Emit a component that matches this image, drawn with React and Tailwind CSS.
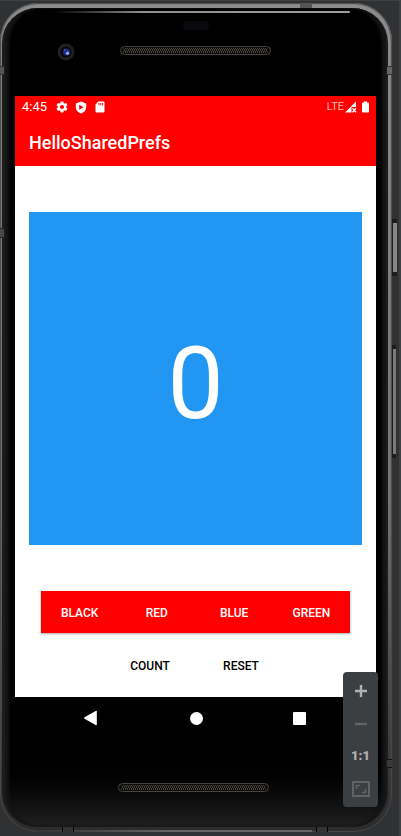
import React, { useState } from "react";

const COLORS = { BLACK: "#000000", RED: "#ff0000", BLUE: "#2196f3", GREEN: "#4caf50" };

function Speaker() {
  return (
    <svg className="h-[9px] w-[151px]" viewBox="0 0 151 9" aria-hidden="true">
      <defs>
        <pattern id="mesh" width="4" height="4" patternUnits="userSpaceOnUse">
          <path d="M0 0l2 2-2 2M2 0l2 2-2 2" stroke="#4c4840" strokeWidth="0.9" fill="none" />
        </pattern>
      </defs>
      <rect x="0.5" y="0.5" width="150" height="8" rx="4" fill="#0d0c0a" stroke="#444341" />
      <rect x="3" y="2" width="145" height="5" rx="2" fill="url(#mesh)" />
    </svg>
  );
}

function Camera() {
  return (
    <svg className="h-[18px] w-[18px]" viewBox="0 0 18 18" aria-hidden="true">
      <circle cx="9" cy="9" r="8.5" fill="#211f22" />
      <circle cx="9" cy="9" r="5.5" fill="#07080f" />
      <circle cx="9.5" cy="9" r="3.6" fill="#1b2c70" />
      <circle cx="10.5" cy="10.2" r="1.8" fill="#7f9cf5" />
      <circle cx="7.6" cy="7" r="1" fill="#4158b8" />
    </svg>
  );
}

function StatusBar() {
  return (
    <div className="flex h-[22px] items-center pr-[7px] pl-[7px] text-white">
      <span className="text-[13px] leading-4">4:45</span>
      <svg className="ml-2 h-[14px] w-[14px]" viewBox="0 0 24 24" fill="currentColor" aria-hidden="true">
        <path d="M19.14 12.94c.04-.3.06-.61.06-.94 0-.32-.02-.64-.07-.94l2.03-1.58a.49.49 0 0 0 .12-.61l-1.92-3.32a.488.488 0 0 0-.59-.22l-2.39.96c-.5-.38-1.03-.7-1.62-.94l-.36-2.54a.484.484 0 0 0-.48-.41h-3.84c-.24 0-.43.17-.47.41l-.36 2.54c-.59.24-1.13.57-1.62.94l-2.39-.96c-.22-.08-.47 0-.59.22L2.74 8.87c-.12.21-.08.47.12.61l2.03 1.58c-.05.3-.09.63-.09.94s.02.64.07.94l-2.03 1.58a.49.49 0 0 0-.12.61l1.92 3.32c.12.22.37.29.59.22l2.39-.96c.5.38 1.03.7 1.62.94l.36 2.54c.05.24.24.41.48.41h3.84c.24 0 .44-.17.47-.41l.36-2.54c.59-.24 1.13-.56 1.62-.94l2.39.96c.22.08.47 0 .59-.22l1.92-3.32c.12-.22.07-.47-.12-.61l-2.01-1.58zM12 15.6A3.6 3.6 0 1 1 12 8.400a3.600 3.600 0 0 1 0 7.200z" />
      </svg>
      <svg className="ml-[6px] h-[13px] w-[12px]" viewBox="0 0 12 13" fill="currentColor" aria-hidden="true">
        <path fillRule="evenodd" d="M6 .5l5.200 2v3.700c0 3-2.200 5.400-5.200 6.300C3 11.600.8 9.200.8 6.200V2.500zM4.200 3.700v5.100l4.300-2.550z" />
      </svg>
      <svg className="ml-[8px] h-[12px] w-[10px]" viewBox="0 0 10 12" fill="currentColor" aria-hidden="true">
        <path fillRule="evenodd" d="M3.300.5H8.500a1 1 0 0 1 1 1v9a1 1 0 0 1-1 1h-7a1 1 0 0 1-1-1V3.500zM3.500 2v2.200h1V2zM5.300 2v2.200h1V2zM7.100 2v2.200h1V2z" />
      </svg>
      <span className="ml-auto text-[11px] leading-4 font-light">LTE</span>
      <svg className="ml-px h-[12px] w-[12px]" viewBox="0 0 12 12" fill="currentColor" aria-hidden="true">
        <path d="M0 11.500L11 .5V6H6.500v5.500z" />
        <path d="M7.500 7.300l3.500 4M11 7.300l-3.500 4" stroke="currentColor" strokeWidth="1.300" />
      </svg>
      <svg className="ml-[5px] h-[12px] w-[7px]" viewBox="0 0 7 12" fill="currentColor" aria-hidden="true">
        <path d="M2 .5h3v1h1.300a.7.7 0 0 1 .7.7v8.600a.7.7 0 0 1-.7.7H.7a.7.7 0 0 1-.7-.7V2.200a.7.7 0 0 1 .7-.7H2z" />
      </svg>
    </div>
  );
}

function ZoomPanel() {
  return (
    <div className="absolute right-[8px] bottom-[20px] flex w-[35px] flex-col rounded bg-[#3c3f41] py-[2px]">
      <button aria-label="Zoom in" className="flex h-[33px] items-center justify-center">
        <svg className="h-4 w-4" viewBox="0 0 16 16" stroke="#afb1b3" strokeWidth="2.4" aria-hidden="true">
          <path d="M8 2v12M2 8h12" />
        </svg>
      </button>
      <button aria-label="Zoom out" className="flex h-[33px] items-center justify-center">
        <svg className="h-4 w-4" viewBox="0 0 16 16" stroke="#616365" strokeWidth="2.4" aria-hidden="true">
          <path d="M2 8h12" />
        </svg>
      </button>
      <button className="h-8 text-[13px] leading-4 font-black text-[#afb1b3]">1:1</button>
      <button aria-label="Fit to window" className="flex h-[33px] items-center justify-center">
        <svg className="h-4 w-[18px]" viewBox="0 0 18 16" fill="none" stroke="#616365" aria-hidden="true">
          <path d="M1 1h16v14H1z" strokeWidth="2" />
          <path d="M4.500 8V4.500H8M13.500 8v3.500H10" strokeWidth="1.500" />
        </svg>
      </button>
    </div>
  );
}

function HelloSharedPrefs() {
  const [count, setCount] = useState(0);
  const [color, setColor] = useState(COLORS.BLUE);
  return (
    <main className="bg-white">
      <header className="bg-[#ff0000]">
        <StatusBar />
        <h1 className="flex h-12 items-center px-[14px] pt-[2px] text-lg font-medium text-white">HelloSharedPrefs</h1>
      </header>
      <div className="px-[14px] pt-[46px] pb-[10px]">
        <output
          className="flex aspect-square w-full items-center justify-center pt-[11px] text-[100px] leading-none text-white"
          style={{ backgroundColor: color }}
        >
          {count}
        </output>
        <div className="mx-3 mt-[46px] grid h-[42px] grid-cols-4 bg-[#ff0000] shadow-[0_1px_2px_rgba(0,0,0,0.35)]">
          {Object.entries(COLORS).map(([name, value]) => (
            <button key={name} onClick={() => setColor(value)} className="pt-[2px] text-xs font-medium text-white">
              {name}
            </button>
          ))}
        </div>
        <div className="mt-3 flex justify-center gap-[11px] text-xs font-medium text-black">
          <button className="h-[42px] w-20" onClick={() => setCount(count + 1)}>COUNT</button>
          <button className="h-[42px] w-20" onClick={() => setCount(0)}>RESET</button>
        </div>
      </div>
    </main>
  );
}

function NavBar() {
  return (
    <nav className="flex h-[42px] items-center justify-between pr-[70px] pl-[68px] text-white">
      <button aria-label="Back">
        <svg className="h-4 w-4" viewBox="0 0 16 16" fill="currentColor" aria-hidden="true">
          <path d="M1.500 7.200L12.700.9q1.100-.5 1.100.6v13q0 1.100-1.100.5L1.500 8.700q-1-.7 0-1.500z" />
        </svg>
      </button>
      <button aria-label="Home" className="h-[13px] w-[13px] rounded-full bg-white" />
      <button aria-label="Overview" className="h-[13px] w-[13px] rounded-[1px] bg-white" />
    </nav>
  );
}

export default function App() {
  return (
    <div className="relative flex min-h-screen flex-col border-t border-r-2 border-[#3d4043] bg-[#2f3133] pt-[2px] pr-[7px] pb-1 font-['Roboto',sans-serif]">
      <div className="relative flex flex-1 flex-col rounded-[38px] bg-linear-to-b from-[#8c8c8c] via-[#747474] via-60% to-[#2c2c2c] pt-[5px] pr-1 pb-[5px] pl-[2px] shadow-[inset_0_0_1px_1px_#4a4a4a]">
        <div className="relative flex flex-1 flex-col rounded-[35px] border-r-2 border-l-3 border-[#1c1c1c] bg-linear-to-b from-black from-90% to-[#202020] pr-[10px] pl-[10px] shadow-[inset_4px_0_3px_#151515,inset_-4px_0_3px_#151515]">
          <div className="absolute top-[3px] right-9 left-12 h-[2px] rounded-full bg-linear-to-r from-transparent via-[#8c908c] via-30% to-[#9ba09b]" />
          <div className="h-[88px]">
            <div className="mx-auto mt-[13px] h-[9px] w-[26px] rounded-full bg-[#090a0e]" />
            <div className="mt-[13px] flex items-center pl-[42px]">
              <Camera />
              <div className="-mt-1 ml-[45px] flex">
                <Speaker />
              </div>
            </div>
          </div>
          <HelloSharedPrefs />
          <NavBar />
          <div className="mt-11 flex justify-center pr-[5px]">
            <Speaker />
          </div>
          <ZoomPanel />
        </div>
        <div className="absolute top-[63px] left-0 h-[9px] w-1 border-y border-[#333] bg-[#555]" />
        <div className="absolute top-[225px] left-0 h-[10px] w-1 border-y border-[#222] bg-[#484848]" />
        <div className="absolute top-[63px] right-0 h-[9px] w-[5px] border-y border-[#333] bg-[#666]" />
        <div className="absolute top-0 right-[80px] h-[5px] w-3 bg-[#555]" />
        <div className="absolute right-0 bottom-[64px] h-[9px] w-[5px] border-y border-[#111] bg-[#3a3a3a]" />
        <div className="absolute right-[80px] bottom-0 left-9 h-[2px] bg-linear-to-r from-[#333] via-[#666] to-[#666]" />
        <div className="absolute bottom-0 left-[62px] h-[5px] w-3 border-x border-black bg-[#333]" />
        <div className="absolute right-[64px] bottom-0 h-[5px] w-3 border-x border-black bg-[#333]" />
        <div className="absolute top-[216px] -right-[5px] h-[57px] w-[5px] border-y-4 border-l border-[#1c1c1c] bg-[#858585]" />
        <div className="absolute top-[342px] -right-1 h-[113px] w-1 border-y-4 border-l border-[#1c1c1c] bg-[#7a7a7a]" />
      </div>
    </div>
  );
}
